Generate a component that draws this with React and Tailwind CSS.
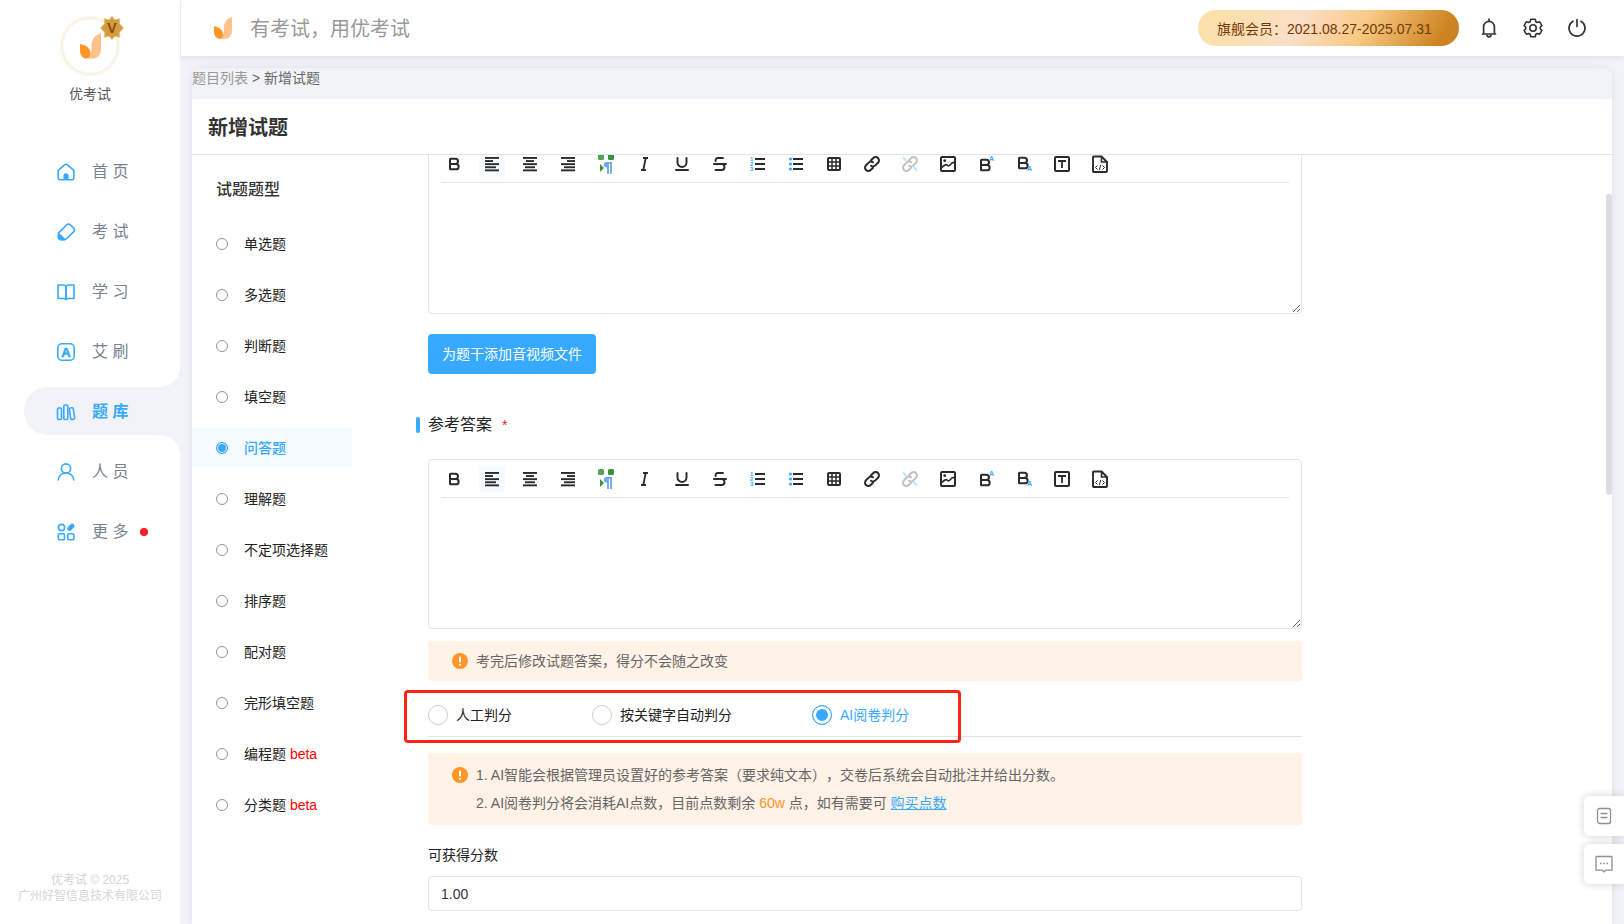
import React, { useState } from 'react';
import { Bold, Strikethrough, Underline } from 'lucide-react';

const navItems = [
  { key: 'home', label: '首 页' },
  { key: 'exam', label: '考 试' },
  { key: 'study', label: '学 习' },
  { key: 'practice', label: '艾 刷' },
  { key: 'bank', label: '题 库' },
  { key: 'people', label: '人 员' },
  { key: 'more', label: '更 多', dot: true },
];

const questionTypes = [
  { label: '单选题' },
  { label: '多选题' },
  { label: '判断题' },
  { label: '填空题' },
  { label: '问答题' },
  { label: '理解题' },
  { label: '不定项选择题' },
  { label: '排序题' },
  { label: '配对题' },
  { label: '完形填空题' },
  { label: '编程题', beta: true },
  { label: '分类题', beta: true },
];

const gradingModes = ['人工判分', '按关键字自动判分', 'AI阅卷判分'];

const NavIcon = ({ name }) => {
  const shapes = {
    home: (
      <>
        <path d="M1.2 7.3 7.8 1.700q1.200-.9 2.400 0l6.600 5.600v7.500a2 2 0 0 1-2 2H3.200a2 2 0 0 1-2-2z" />
        <path d="M6.400 17v-4.200a2.600 2.600 0 0 1 5.200 0V17z" fill="currentColor" stroke="none" />
      </>
    ),
    exam: (
      <>
        <path d="M2 9.600 9.600 2a3 3 0 0 1 4 0l3 2.900a2.700 2.700 0 0 1 0 3.900L9.300 16q-.9.800-2 .800H4a2.700 2.700 0 0 1-2.700-2.700v-2.700q0-1 .7-1.800z" />
        <path d="M1.800 10 9 16.300q-.8.900-1.900.9H4A3.100 3.100 0 0 1 .9 14.100v-2.300q0-1.100.9-1.800z" fill="currentColor" stroke="none" />
      </>
    ),
    study: (
      <>
        <path d="M1 2h5.500A2.500 2.500 0 0 1 9 4v12.500q-.8-1-2.500-1H1z" />
        <path d="M17 2h-5.500A2.500 2.500 0 0 0 9 4v12.500q.8-1 2.500-1H17z" />
      </>
    ),
    practice: (
      <>
        <rect x="0.8" y="0.8" width="16.400" height="16.400" rx="4" />
        <text x="9" y="13.700" textAnchor="middle" fontSize="13" fontWeight="700" fill="currentColor" stroke="currentColor" strokeWidth="0.6">A</text>
      </>
    ),
    bank: (
      <>
        <rect x="0.5" y="5" width="4" height="11.500" rx="1.200" />
        <rect x="6.800" y="2" width="4" height="14.500" rx="1.200" />
        <rect x="13" y="4.800" width="4" height="11.700" rx="1.200" transform="rotate(-9 15 10.600)" />
      </>
    ),
    people: (
      <>
        <circle cx="9" cy="5.500" r="4.600" />
        <path d="M1.200 17.500a7.800 7.800 0 0 1 15.600 0" />
      </>
    ),
    more: (
      <>
        <circle cx="4.500" cy="4.500" r="3.100" />
        <rect x="1.300" y="10.800" width="6.200" height="6" rx="1.200" />
        <rect x="10.700" y="10.800" width="6.200" height="6" rx="1.200" />
        <path d="m12.500 5.700 2.700-2.700" strokeWidth="4.600" strokeLinecap="round" />
      </>
    ),
  };
  return (
    <svg viewBox="0 0 18 18" className="w-[18px] h-[18px] text-[#37a9ff] overflow-visible" fill="none" stroke="currentColor" strokeWidth="1.600" strokeLinejoin="round">
      {shapes[name]}
    </svg>
  );
};

const Logo = ({ className }) => (
  <svg viewBox="0 0 18 22" className={className}>
    <path d="M18 0v14.500a7.500 7.500 0 0 1-7.500 7.500Q6 22 5 20.500c4-1.500 5-4 4.800-7.500C9.600 4.500 13 1.500 18 0z" fill="#ffc28a" />
    <path d="M0 9.300c5 .7 9 3.700 9 8.200 0 2.500-1.500 4.300-3.500 4.300C2 21.500 0 18.500 0 15z" fill="#ff9628" />
  </svg>
);

const AlignIcon = ({ bars }) => (
  <>
    {bars.map(([x, w], i) => (
      <rect key={i} x={x} y={1 + i * 3.1} width={w} height="1.900" fill="currentColor" />
    ))}
  </>
);

const ListIcon = ({ numbered }) => (
  <>
    {[2, 7, 12].map((y) => (
      <rect key={y} x="5" y={y} width="10" height="2" fill="currentColor" />
    ))}
    {numbered
      ? [1, 2, 3].map((n) => (
          <text key={n} x="0" y={n * 5} fontSize="6" fontWeight="700" fill="#37a9ff">{n}</text>
        ))
      : [3, 8, 13].map((y) => <circle key={y} cx="2.500" cy={y} r="1.600" fill="#37a9ff" />)}
  </>
);

const LinkShape = () => (
  <>
    <path d="M7 4.300 9.300 2a3.300 3.300 0 0 1 4.700 4.700L11.300 9.400a3.300 3.300 0 0 1-4.300.3" />
    <path d="M9 11.700 6.700 14A3.300 3.300 0 0 1 2 9.300l2.700-2.700A3.300 3.300 0 0 1 9 6.300" />
  </>
);

const Svg = ({ children }) => (
  <svg viewBox="0 0 16 16" className="w-4 h-4 overflow-visible" fill="none" stroke="none">
    {children}
  </svg>
);

const tools = [
  { name: '加粗', icon: <Bold size={16} strokeWidth={3} /> },
  { name: '左对齐', active: true, icon: <Svg><AlignIcon bars={[[1, 14], [1, 8], [1, 14], [1, 11], [1, 14]]} /></Svg> },
  { name: '居中', icon: <Svg><AlignIcon bars={[[1, 14], [4, 8], [1, 14], [3, 10], [1, 14]]} /></Svg> },
  { name: '右对齐', icon: <Svg><AlignIcon bars={[[1, 14], [7, 8], [1, 14], [4, 11], [1, 14]]} /></Svg> },
  {
    name: '从左到右',
    icon: (
      <Svg>
        <rect x="0" y="-2" width="6" height="6" rx="1.500" fill="#55a455" />
        <rect x="10" y="-2" width="6" height="6" rx="1.500" fill="#3c8f3f" />
        <path d="M2 8v8l4-4z" fill="#3f8f42" />
        <path d="M10 6v12M13 6v12M14 6.800H8" stroke="#6ea8ec" strokeWidth="1.800" />
        <path d="M10 6H8.500a2.700 2.700 0 0 0 0 5.500H10z" fill="#6ea8ec" />
      </Svg>
    ),
  },
  { name: '斜体', icon: <Svg><path d="M7 2h5M5 14h5M9.700 2 7.300 14" stroke="currentColor" strokeWidth="1.800" /></Svg> },
  { name: '下划线', icon: <Underline size={18} strokeWidth={2.600} /> },
  { name: '删除线', icon: <Strikethrough size={18} strokeWidth={2.600} /> },
  { name: '有序列表', icon: <Svg><ListIcon numbered /></Svg> },
  { name: '无序列表', icon: <Svg><ListIcon /></Svg> },
  {
    name: '表格',
    icon: (
      <Svg>
        <rect x="2" y="2" width="12" height="12" rx="1" stroke="currentColor" strokeWidth="2" />
        <path d="M6 2v12M10 2v12M2 6h12M2 10h12" stroke="currentColor" strokeWidth="1.500" />
      </Svg>
    ),
  },
  { name: '链接', icon: <Svg><g stroke="currentColor" strokeWidth="2" strokeLinecap="round"><LinkShape /></g></Svg> },
  {
    name: '取消链接',
    icon: (
      <Svg>
        <g stroke="#c2c2c2" strokeWidth="2" strokeLinecap="round"><LinkShape /></g>
        <path d="m1 1.500 4 4M11 10.500l4 4" stroke="#bfe3ff" strokeWidth="1.800" />
      </Svg>
    ),
  },
  {
    name: '图片',
    icon: (
      <Svg>
        <rect x="1" y="1" width="14" height="14" rx="1" stroke="currentColor" strokeWidth="2" />
        <path d="M1.500 11.500 5 9q1-.7 2 0l.8.6q1 .6 1.900-.3L12 7l3-1" stroke="currentColor" strokeWidth="1.600" />
        <circle cx="4.700" cy="4.700" r="1.400" fill="currentColor" />
      </Svg>
    ),
  },
  {
    name: '上标',
    icon: (
      <Svg>
        <Bold x="-1" y="1" size={16} strokeWidth={3} />
        <text x="11" y="5" fontSize="7" fontWeight="700" fill="#37a9ff">A</text>
      </Svg>
    ),
  },
  {
    name: '下标',
    icon: (
      <Svg>
        <Bold x="-1" y="-1" size={16} strokeWidth={3} />
        <text x="11" y="15" fontSize="7" fontWeight="700" fill="#37a9ff">A</text>
      </Svg>
    ),
  },
  {
    name: '文本框',
    icon: (
      <Svg>
        <rect x="1" y="1" width="14" height="14" rx="1" stroke="currentColor" strokeWidth="2" />
        <path d="M4 5h8M8 5v7" stroke="currentColor" strokeWidth="1.800" />
      </Svg>
    ),
  },
  {
    name: '源代码',
    icon: (
      <Svg>
        <path d="M1 1.500q0-1 1-1h7.500L15 6v9q0 1-1 1H2q-1 0-1-1z" stroke="currentColor" strokeWidth="1.900" strokeLinejoin="round" />
        <path d="M9.500.5V6H15" stroke="currentColor" strokeWidth="1.600" />
        <path d="m5.500 9.500-2 2 2 2M10.500 9.500l2 2-2 2M8.700 9l-1.400 5" stroke="currentColor" />
      </Svg>
    ),
  },
];

const Editor = ({ label }) => (
  <div className="border border-[#e4e4e4] rounded bg-white">
    <div className="mx-3 pt-[6px] pb-[5px] flex gap-3 border-b border-[#e4e4e4] text-[#2b2b2b]">
      {tools.map((tool) => (
        <button
          key={tool.name}
          type="button"
          aria-label={tool.name}
          className={`w-[26px] h-[26px] flex items-center justify-center shrink-0 ${tool.active ? 'bg-[#f5fbff]' : ''}`}
        >
          {tool.icon}
        </button>
      ))}
    </div>
    <textarea aria-label={label} className="block w-full h-[130px] px-3 py-2 text-sm resize outline-none" />
  </div>
);

const WarnIcon = () => (
  <svg viewBox="0 0 16 16" className="w-4 h-4 shrink-0">
    <circle cx="8" cy="8" r="8" fill="#ff9628" />
    <rect x="7" y="3.500" width="2" height="6" rx="1" fill="#fff" />
    <circle cx="8" cy="11.800" r="1.100" fill="#fff" />
  </svg>
);

const Sidebar = () => (
  <aside className="w-[180px] shrink-0 bg-white flex flex-col items-center">
    <div className="relative mt-4 w-[60px] h-[60px] rounded-full border-2 border-[#fcf5ea] flex items-center justify-center">
      <div className="w-14 h-14 rounded-full border border-[#fbebd5] flex items-center justify-center">
        <Logo className="w-[21px] h-[26px]" />
      </div>
      <svg viewBox="0 0 24 24" className="absolute -right-[6px] -top-0.5 w-6 h-6">
        <path d="m12 .5 3 3.300 4.800-1-.4 4.800 4.100 4.400-4.100 4.400.4 4.800-4.800-1-3 3.300-3-3.300-4.800 1 .4-4.800L.5 12l4.100-4.400-.4-4.800 4.800 1z" fill="#d39c43" stroke="#e6c47c" />
        <text x="12" y="17" textAnchor="middle" fontSize="14" fontWeight="700" fill="#8a4b08">V</text>
      </svg>
    </div>
    <p className="mt-2 text-sm leading-5 text-[#555]">优考试</p>

    <nav className="mt-[43px] w-full flex flex-col gap-3">
      {navItems.map((item) => {
        const active = item.key === 'bank';
        return (
          <a
            key={item.key}
            href={`#${item.key}`}
            className={`relative ml-6 h-12 pl-[33px] pt-0.5 flex items-center text-base ${active ? 'bg-[#f2f3f8] rounded-l-full text-[#37a9ff] font-bold' : 'text-[#778291]'}`}
          >
            {active && (
              <>
                <span className="absolute right-0 -top-5 w-5 h-5 bg-[#f2f3f8]"><span className="block h-full bg-white rounded-br-[20px]" /></span>
                <span className="absolute right-0 -bottom-5 w-5 h-5 bg-[#f2f3f8]"><span className="block h-full bg-white rounded-tr-[20px]" /></span>
              </>
            )}
            <NavIcon name={item.key} />
            <span className="ml-[17px]">{item.label}</span>
            {item.dot && <span className="ml-3 w-2 h-2 rounded-full bg-[#fb1d28]" />}
          </a>
        );
      })}
    </nav>

    <footer className="mt-auto mb-5 text-xs leading-4 text-center text-[#d5d5d5]">
      <p>优考试 © 2025</p>
      <p>广州好智信息技术有限公司</p>
    </footer>
  </aside>
);

const Header = () => (
  <header className="h-14 shrink-0 ml-px bg-white shadow-[0_2px_6px_rgba(0,0,40,0.07)] flex items-center pl-[33px] pr-[37px]">
    <Logo className="w-[18px] h-[22px]" />
    <p className="ml-[18px] pt-0.5 text-xl text-[#999]">有考试，用优考试</p>
    <div className="ml-auto w-[261px] h-9 pl-[19px] pt-0.5 rounded-full flex items-center text-sm text-[#733804] bg-[linear-gradient(120deg,#fce0ae_0%,#fce0ae_15%,#fadfc8_38%,#f9c985_62%,#cc8420_92%)]">
      旗舰会员：2021.08.27-2025.07.31
    </div>
    <div className="ml-5 flex gap-6 text-[#333]">
      <button type="button" aria-label="通知">
        <svg viewBox="0 0 20 20" className="w-5 h-5" fill="none" stroke="currentColor" strokeWidth="1.700" strokeLinejoin="round">
          <path d="M10 1v2M3.500 16h13M4.600 16V8.800a5.400 5.400 0 0 1 10.800 0V16" strokeLinecap="round" />
          <path d="M8 16.800a2 2 0 0 0 4 0" />
        </svg>
      </button>
      <button type="button" aria-label="设置">
        <svg viewBox="0 0 20 20" className="w-5 h-5" fill="none" stroke="currentColor" strokeWidth="1.600" strokeLinejoin="round">
          <path d="M7.800 1.300h4.400l.7 2.400 1.300.8 2.500-.7 2.200 3.800-1.700 1.700v1.400l1.700 1.700-2.200 3.800-2.500-.7-1.300.8-.7 2.400H7.800l-.7-2.400-1.300-.8-2.500.7-2.200-3.800 1.700-1.700V9.300L1.100 7.600l2.200-3.800 2.500.7 1.300-.8z" />
          <circle cx="10" cy="10" r="3.200" />
        </svg>
      </button>
      <button type="button" aria-label="退出">
        <svg viewBox="0 0 20 20" className="w-5 h-5" fill="none" stroke="currentColor" strokeWidth="1.700" strokeLinecap="round">
          <path d="M10 1.500v7M6 3.200a8 8 0 1 0 8 0" />
        </svg>
      </button>
    </div>
  </header>
);

const QuestionTypes = () => {
  const [selected, setSelected] = useState('问答题');

  return (
    <div className="w-40 shrink-0 pt-[23px]">
      <h2 className="pl-6 text-base leading-6 font-medium text-[#333]">试题题型</h2>
      <div className="mt-[22px] flex flex-col gap-3">
        {questionTypes.map(({ label, beta }) => (
          <label
            key={label}
            className={`h-[39px] pl-6 flex items-center gap-4 text-sm ${selected === label ? 'bg-[#f5fbff] text-[#37a9ff] font-medium' : 'text-[#222]'}`}
          >
            <input
              type="radio"
              name="questionType"
              checked={selected === label}
              onChange={() => setSelected(label)}
              className="appearance-none w-3 h-3 shrink-0 rounded-full border border-[#949494] checked:border-[#37a9ff] checked:bg-[#37a9ff] checked:shadow-[inset_0_0_0_1px_#fff]"
            />
            <span className="whitespace-nowrap">
              {label}
              {beta && <span className="text-[#ff0000]"> beta</span>}
            </span>
          </label>
        ))}
      </div>
    </div>
  );
};

const AnswerForm = () => {
  const [mode, setMode] = useState('AI阅卷判分');
  const [score, setScore] = useState('1.00');

  return (
    <div className="flex-1 min-w-0 pl-[76px] pr-[310px] -mt-[11px] text-sm">
      <Editor label="题干" />
      <button type="button" className="mt-5 h-10 px-[14px] rounded bg-[#37a9ff] text-white">
        为题干添加音视频文件
      </button>

      <h3 className="mt-[39px] mb-[22px] -ml-3 flex items-center text-base leading-6 text-[#222]">
        <span className="w-1 h-4 mr-2 rounded-sm bg-[#37a9ff]" />
        参考答案
        <span className="ml-[10px] text-sm leading-6 text-[#e02020]">*</span>
      </h3>

      <Editor label="参考答案" />

      <div className="mt-3 h-10 pl-6 rounded bg-[#fff2e6] flex items-center gap-2 text-[#666]">
        <WarnIcon />
        <p>考完后修改试题答案，得分不会随之改变</p>
      </div>

      <div className="relative mt-3 h-11 flex gap-20 border-b border-[#e4e4e4]">
        {gradingModes.map((name) => (
          <label key={name} className={`h-11 flex items-center gap-2 whitespace-nowrap ${mode === name ? 'text-[#37a9ff]' : 'text-[#222]'}`}>
            <input
              type="radio"
              name="grading"
              checked={mode === name}
              onChange={() => setMode(name)}
              className="appearance-none w-5 h-5 rounded-full border border-[#ccc] checked:border-[#37a9ff] checked:bg-[#37a9ff] checked:shadow-[inset_0_0_0_3px_#fff]"
            />
            {name}
          </label>
        ))}
        <div className="absolute -left-6 -top-[3px] w-[557px] h-[53px] border-3 border-[#fd2315] rounded pointer-events-none" />
      </div>

      <div className="mt-4 py-2 pl-6 rounded bg-[#fff2e6] flex gap-2 leading-7 text-[#666]">
        <div className="h-7 flex items-center"><WarnIcon /></div>
        <div className="[text-spacing-trim:space-all]">
          <p>1. AI智能会根据管理员设置好的参考答案（要求纯文本），交卷后系统会自动批注并给出分数。</p>
          <p>
            2. AI阅卷判分将会消耗AI点数，目前点数剩余 <span className="text-[#ff9628]">60w</span> 点，如有需要可{' '}
            <a href="#points" className="text-[#37a9ff] underline">购买点数</a>
          </p>
        </div>
      </div>

      <label htmlFor="score" className="block mt-[18px] leading-6 text-[#222]">可获得分数</label>
      <input
        id="score"
        value={score}
        onChange={(e) => setScore(e.target.value)}
        className="mt-[9px] w-full h-[35px] px-3 rounded border border-[#e4e4e4] text-sm text-[#333] outline-none"
      />
    </div>
  );
};

const FloatingTools = () => (
  <div className="fixed right-0 bottom-10 flex flex-col gap-2 text-[#8f8f8f]">
    <button type="button" aria-label="文档" className="w-10 h-10 rounded-l-md bg-white shadow-[0_0_8px_rgba(0,0,0,0.18)] flex items-center justify-center">
      <svg viewBox="0 0 18 18" className="w-[18px] h-[18px]" fill="none" stroke="currentColor" strokeWidth="1.300">
        <rect x="2.500" y="1.500" width="13" height="15" rx="2" />
        <path d="M5.500 6.500h7M5.500 10.500h7" />
      </svg>
    </button>
    <button type="button" aria-label="客服" className="w-10 h-10 rounded-l-md bg-white shadow-[0_0_8px_rgba(0,0,0,0.18)] flex items-center justify-center">
      <svg viewBox="0 0 18 18" className="w-[18px] h-[18px]" fill="none" stroke="currentColor" strokeWidth="1.300">
        <path d="M1.700 1.500h14.600q.7 0 .7.700v13H10.700L9 16.900 7.300 15.200H1v-13q0-.7.7-.7z" />
        <path d="M5 8.500h1.500M8.300 8.500h1.500M11.500 8.500H13" strokeWidth="1.500" />
      </svg>
    </button>
  </div>
);

const App = () => (
  <div className="h-screen flex overflow-hidden bg-[#f2f3f8] font-['Liberation_Sans','Noto_Sans_CJK_SC',sans-serif]">
    <Sidebar />
    <div className="flex-1 min-w-0 flex flex-col">
      <Header />
      <main className="relative flex-1 min-h-0 mt-3 ml-3 mr-3 flex flex-col bg-white rounded-t-[10px] shadow-[0_0_8px_rgba(0,0,40,0.08)]">
        <nav className="h-[31px] shrink-0 rounded-t-[10px] bg-[#f2f3f8] text-sm leading-5 text-[#666]">
          <a href="#list" className="text-[#999]">题目列表</a> &gt; 新增试题
        </nav>
        <div className="h-14 shrink-0 pl-4 pt-0.5 flex items-center border-b border-[#e4e4e4]">
          <h1 className="text-xl font-bold text-[#333]">新增试题</h1>
        </div>
        <div className="flex-1 min-h-0 flex overflow-hidden">
          <QuestionTypes />
          <AnswerForm />
        </div>
        <div className="absolute right-0 top-[126px] w-[6px] h-[301px] rounded-full bg-[#dcdde0]" />
      </main>
    </div>
    <FloatingTools />
  </div>
);

export default App;
